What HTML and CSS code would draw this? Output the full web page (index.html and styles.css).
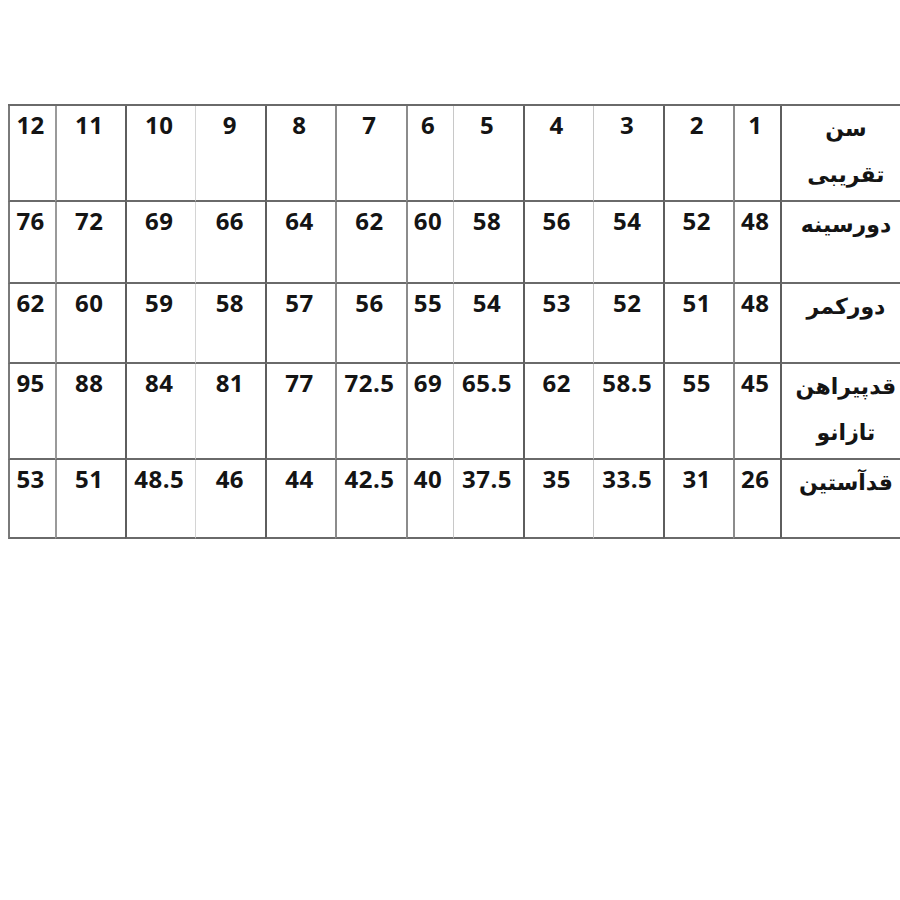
FILE: index.html
```html
<!DOCTYPE html>
<html lang="fa">
<head>
<meta charset="utf-8">
<title>جدول سایز</title>
<link rel="stylesheet" href="styles.css">
</head>
<body>
<div class="page">
  <table class="size" dir="rtl">
    <colgroup>
      <col class="c-label">
      <col class="c-n">
      <col class="c-w">
      <col class="c-w">
      <col class="c-w">
      <col class="c-w">
      <col class="c-n">
      <col class="c-w">
      <col class="c-w">
      <col class="c-w">
      <col class="c-w">
      <col class="c-w">
      <col class="c-n">
    </colgroup>
    <tr class="r-tall">
      <td class="label">سن<br>تقریبی</td>
      <td>1</td><td>2</td><td>3</td><td>4</td><td>5</td><td>6</td><td>7</td><td>8</td><td>9</td><td>10</td><td>11</td><td>12</td>
    </tr>
    <tr class="r-a">
      <td class="label">دورسینه</td>
      <td>48</td><td>52</td><td>54</td><td>56</td><td>58</td><td>60</td><td>62</td><td>64</td><td>66</td><td>69</td><td>72</td><td>76</td>
    </tr>
    <tr class="r-b">
      <td class="label">دورکمر</td>
      <td>48</td><td>51</td><td>52</td><td>53</td><td>54</td><td>55</td><td>56</td><td>57</td><td>58</td><td>59</td><td>60</td><td>62</td>
    </tr>
    <tr class="r-tall">
      <td class="label">قدپیراهن<br>تازانو</td>
      <td>45</td><td>55</td><td>58.5</td><td>62</td><td>65.5</td><td>69</td><td>72.5</td><td>77</td><td>81</td><td>84</td><td>88</td><td>95</td>
    </tr>
    <tr class="r-c">
      <td class="label">قدآستین</td>
      <td>26</td><td>31</td><td>33.5</td><td>35</td><td>37.5</td><td>40</td><td>42.5</td><td>44</td><td>46</td><td>48.5</td><td>51</td><td>53</td>
    </tr>
  </table>
</div>
</body>
</html>
```

FILE: styles.css
```css
html, body {
  margin: 0;
  padding: 0;
  background: #ffffff;
  overflow: hidden;
}

.page {
  padding: 104px 0 0 8px;
  width: 920px;
}

.size {
  border-collapse: separate;
  border-spacing: 0;
  table-layout: fixed;
  width: 904px;
  border-top: 2px solid #6a6a6a;
  border-right: 2px solid #6a6a6a;
}

.c-label { width: 130px; }
.c-n { width: 47px; }
.c-w { width: 70px; }

.size td {
  box-sizing: border-box;
  vertical-align: top;
  text-align: center;
  padding: 4px 0 0 0;
  font-family: "Open Sans", "Liberation Sans", sans-serif;
  font-weight: 700;
  font-size: 24px;
  line-height: 30px;
  color: #141414;
  border-bottom: 2px solid #6a6a6a;
  border-left: 2px solid #8c8c8c;
  white-space: nowrap;
  direction: ltr;
  letter-spacing: 0.5px;
}

.size td.label {
  direction: rtl;
  font-family: "DejaVu Sans", sans-serif;
  font-weight: 700;
  font-size: 22px;
  line-height: 46px;
  padding: 0;
  letter-spacing: 0;
}

/* vertical line shades, per column (left edge of each cell) */
.size td:nth-child(1) { border-left-color: #5e5e5e; }
.size td:nth-child(2) { border-left-color: #8c8c8c; }
.size td:nth-child(3) { border-left-color: #5e5e5e; }
.size td:nth-child(4) { border-left: 1px solid #c8c8c8; }
.size td:nth-child(5) { border-left-color: #5e5e5e; }
.size td:nth-child(6) { border-left: 1px solid #c8c8c8; }
.size td:nth-child(7) { border-left-color: #8c8c8c; }
.size td:nth-child(8) { border-left-color: #8c8c8c; }
.size td:nth-child(9) { border-left-color: #5e5e5e; }
.size td:nth-child(10) { border-left: 1px solid #d4d4d4; }
.size td:nth-child(11) { border-left-color: #5e5e5e; }
.size td:nth-child(12) { border-left-color: #9a9a9a; }
.size td:nth-child(13) { border-left-color: #7a7a7a; }

.r-tall { height: 96px; }
.r-a { height: 82px; }
.r-b { height: 80px; }
.r-c { height: 79px; }
```
